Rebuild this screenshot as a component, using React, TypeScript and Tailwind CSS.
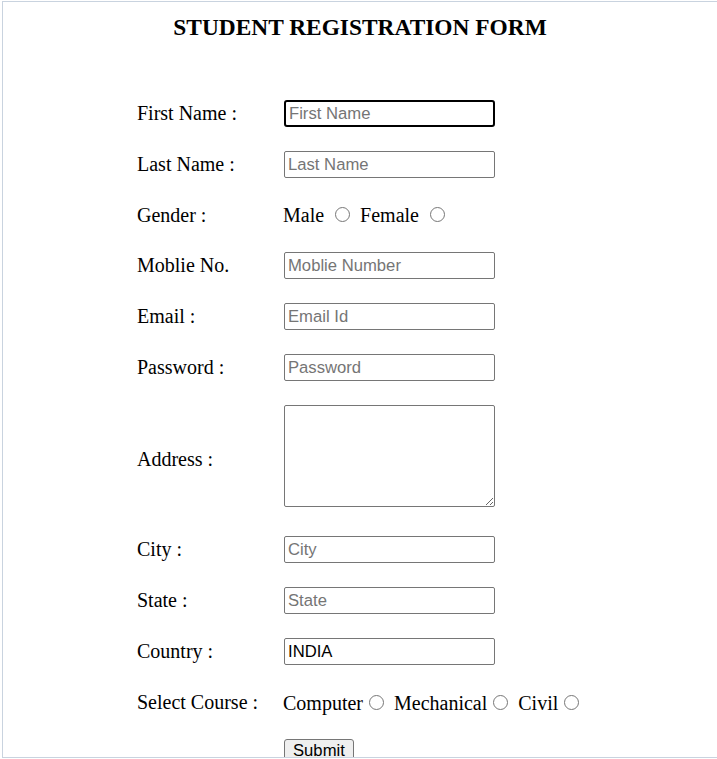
import React from "react";

const serif = "font-['Liberation_Serif','Times_New_Roman',serif]";
const inputCls =
  "w-[211px] h-[27px] border border-[#767676] rounded-[2px] px-[3px] text-[16.67px] text-black font-['Liberation_Sans',Arial,sans-serif] placeholder:text-[#757575] bg-white";

const Row = ({ label, h = "h-[27px]", children }: { label: string; h?: string; children: React.ReactNode }) => (
  <div className={`flex items-center ${h}`}>
    <div className="w-[147px] text-[20px] -mt-[1px]">{label}</div>
    <div className="flex items-center">{children}</div>
  </div>
);

const Radio = ({ name }: { name: string }) => (
  <input type="radio" name={name} className="w-[15px] h-[15px] align-baseline ml-[6px] mr-[5px] mb-[1px]" />
);

const App = () => {
  return (
    <div className={`w-[717px] h-[759px] bg-white ${serif} text-black`}>
      <div className="mt-[1px] ml-[2px] h-[757px] border-t border-l border-b border-[#c9d3df] overflow-hidden">
        <h3 className="pt-[12px] text-center font-bold text-[23.4px] leading-[26px]">STUDENT REGISTRATION FORM</h3>
        <form className="pl-[134px] pt-[60px] flex flex-col">
          <Row label="First Name :">
            <input className={`${inputCls} border-2 border-black rounded-[3px] px-[2px]`} placeholder="First Name" />
          </Row>
          <div className="h-[24px]" />
          <Row label="Last Name :">
            <input className={inputCls} placeholder="Last Name" />
          </Row>
          <div className="h-[24px]" />
          <Row label="Gender :" h="h-[26px]">
            <span className="text-[20px] -ml-[1px]">
              Male <Radio name="gender" />
              {" "}Female <Radio name="gender" />
            </span>
          </Row>
          <div className="h-[24px]" />
          <Row label="Moblie No.">
            <input className={inputCls} placeholder="Moblie Number" />
          </Row>
          <div className="h-[24px]" />
          <Row label="Email :">
            <input className={inputCls} placeholder="Email Id" />
          </Row>
          <div className="h-[24px]" />
          <Row label="Password :">
            <input type="password" className={inputCls} placeholder="Password" />
          </Row>
          <div className="h-[24px]" />
          <div className="flex items-center h-[102px]">
            <div className="w-[147px] text-[20px] pt-[6px]">Address :</div>
            <textarea className="w-[211px] h-[102px] border border-[#767676] rounded-[2px] bg-white" />
          </div>
          <div className="h-[29px]" />
          <Row label="City :">
            <input className={inputCls} placeholder="City" />
          </Row>
          <div className="h-[24px]" />
          <Row label="State :">
            <input className={inputCls} placeholder="State" />
          </Row>
          <div className="h-[24px]" />
          <Row label="Country :">
            <input className={inputCls} defaultValue="INDIA" />
          </Row>
          <div className="h-[24px]" />
          <Row label="Select Course :">
            <span className="text-[20px] -ml-[1px]">
              Computer<Radio name="course" />
              {" "}Mechanical<Radio name="course" />
              {" "}Civil<Radio name="course" />
            </span>
          </Row>
          <div className="h-[23px]" />
          <div className="pl-[147px]">
            <button
              type="button"
              className="py-[1px] px-[8px] leading-[19px] bg-[#efefef] border border-[#767676] rounded-[3px] text-[16.67px] font-['Liberation_Sans',Arial,sans-serif]"
            >
              Submit
            </button>
          </div>
        </form>
      </div>
    </div>
  );
};

export default App;
